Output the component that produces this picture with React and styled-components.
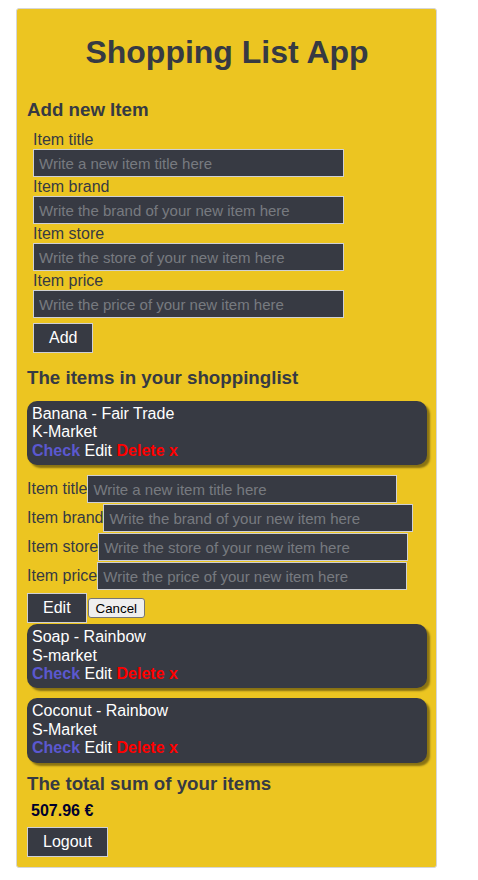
import React, { useState } from 'react';
import styled, { createGlobalStyle } from 'styled-components';

const GlobalStyle = createGlobalStyle`
  body {
    margin: 0;
    background: #ffffff;
    font-family: "Liberation Sans", Arial, sans-serif;
  }
`;

const dark = '#373a43';
const ink = '#363a43';

const Panel = styled.div`
  box-sizing: border-box;
  width: 421px;
  margin: 8px 0 0 16px;
  padding: 0 9px 10px 10px;
  background: #ecc521;
  border: 1px solid #d6d6d6;
  border-radius: 3px;
`;

const Title = styled.h1`
  margin: 25px 0 0;
  font-size: 32px;
  font-weight: bold;
  text-align: center;
  color: ${ink};
`;

const SectionTitle = styled.h3`
  margin: ${(p) => p.$margin || '0'};
  font-size: 18.72px;
  font-weight: bold;
  color: ${ink};
`;

const AddForm = styled.form`
  margin-top: 9px;
  padding-left: 6px;
`;

const Label = styled.label`
  display: block;
  font-size: 16px;
  line-height: 19px;
  color: ${ink};
`;

const TextInput = styled.input`
  box-sizing: border-box;
  display: block;
  width: ${(p) => p.$width || '311px'};
  height: 28px;
  margin: 0;
  padding: 0 5px;
  background: ${dark};
  border: 1px solid #cfd0d4;
  color: #fff;
  font-family: "Liberation Sans", Arial, sans-serif;
  font-size: 15px;
  outline: none;

  &::placeholder {
    color: #777a80;
  }
`;

const DarkButton = styled.button`
  box-sizing: border-box;
  height: ${(p) => p.$height || '30px'};
  margin: ${(p) => p.$margin || '0'};
  padding: 0 15px;
  background: ${dark};
  border: 1px solid #cfd0d4;
  color: #fff;
  font-family: "Liberation Sans", Arial, sans-serif;
  font-size: 16px;
  cursor: pointer;
`;

const ItemCard = styled.div`
  padding: 4px 6px 5px 5px;
  margin-bottom: 10px;
  background: ${dark};
  color: #fff;
  font-size: 16px;
  line-height: 18.4px;
  border-radius: 10px;
  box-shadow: 3px 3px 2px rgba(0, 0, 0, 0.42);
`;

const Action = styled.span`
  font-weight: ${(p) => (p.$bold ? 'bold' : 'normal')};
  color: ${(p) => p.$color || '#fff'};
  cursor: pointer;
`;

const EditForm = styled.form`
  margin-top: 1px;
`;

const EditRow = styled.div`
  display: flex;
  align-items: center;
  margin-bottom: 1px;
  font-size: 16px;
  color: ${ink};
`;

const ButtonRow = styled.div`
  display: flex;
  align-items: center;
  margin: 3px 0 1px;
`;

const PlainButton = styled.button`
  box-sizing: border-box;
  height: 20px;
  margin: 0 0 0 1px;
  padding: 0 7px;
  background: #efefef;
  border: 1px solid #767676;
  border-radius: 3px;
  color: #000;
  font-family: "Liberation Sans", Arial, sans-serif;
  font-size: 13.33px;
`;

const Amount = styled.div`
  margin: 7px 0 0 4px;
  font-size: 16px;
  font-weight: bold;
  color: #00002e;
`;

const fields = [
  { key: 'title', label: 'Item title', placeholder: 'Write a new item title here' },
  { key: 'brand', label: 'Item brand', placeholder: 'Write the brand of your new item here' },
  { key: 'store', label: 'Item store', placeholder: 'Write the store of your new item here' },
  { key: 'price', label: 'Item price', placeholder: 'Write the price of your new item here' },
];

const initialItems = [
  { id: 1, title: 'Banana', brand: 'Fair Trade', store: 'K-Market' },
  { id: 2, title: 'Soap', brand: 'Rainbow', store: 'S-market' },
  { id: 3, title: 'Coconut', brand: 'Rainbow', store: 'S-Market' },
];

const App = () => {
  const [items] = useState(initialItems);
  const [editing, setEditing] = useState(1);

  return (
    <>
      <GlobalStyle />
      <Panel>
        <Title>Shopping List App</Title>
        <SectionTitle $margin="28px 0 0">Add new Item</SectionTitle>

        <AddForm onSubmit={(e) => e.preventDefault()}>
          {fields.map((f) => (
            <div key={f.key}>
              <Label>{f.label}</Label>
              <TextInput placeholder={f.placeholder} />
            </div>
          ))}
          <DarkButton $margin="5px 0 0">Add</DarkButton>
        </AddForm>

        <SectionTitle $margin="14px 0 12px">The items in your shoppinglist</SectionTitle>

        {items.map((item) => (
          <div key={item.id}>
            <ItemCard>
              <div>{item.title} - {item.brand}</div>
              <div>{item.store}</div>
              <div>
                <Action $bold $color="#5b58cf">Check</Action>{' '}
                <Action onClick={() => setEditing(item.id)}>Edit</Action>{' '}
                <Action $bold $color="#ff0000">Delete x</Action>
              </div>
            </ItemCard>

            {editing === item.id && (
              <EditForm onSubmit={(e) => e.preventDefault()}>
                {fields.map((f) => (
                  <EditRow key={f.key}>
                    <span>{f.label}</span>
                    <TextInput $width="310px" placeholder={f.placeholder} />
                  </EditRow>
                ))}
                <ButtonRow>
                  <DarkButton>Edit</DarkButton>
                  <PlainButton type="button" onClick={() => setEditing(null)}>
                    Cancel
                  </PlainButton>
                </ButtonRow>
              </EditForm>
            )}
          </div>
        ))}

        <SectionTitle>The total sum of your items</SectionTitle>
        <Amount>507.96 €</Amount>
        <DarkButton $margin="7px 0 0">Logout</DarkButton>
      </Panel>
    </>
  );
};

export default App;
